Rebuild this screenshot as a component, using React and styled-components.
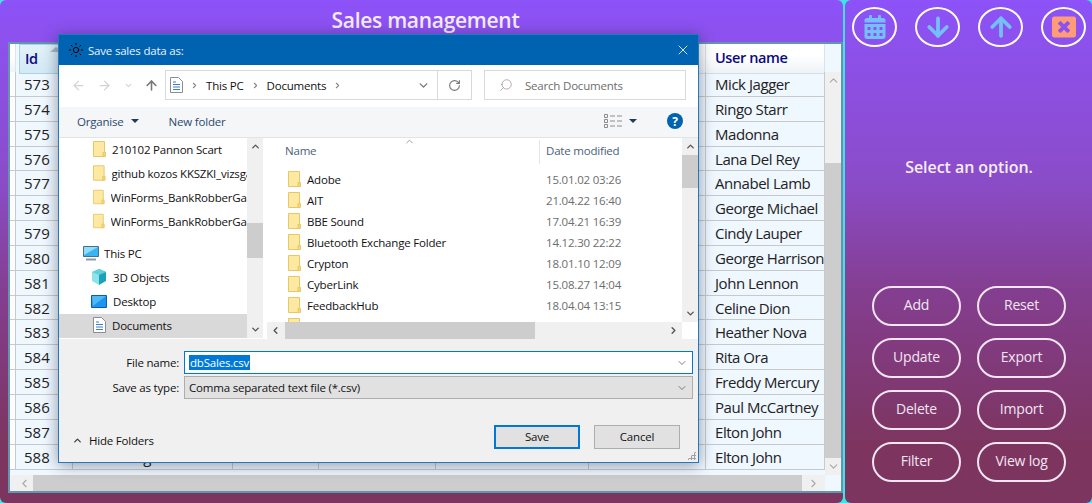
import styled, { createGlobalStyle } from 'styled-components'
import {
  ArrowDown,
  ArrowLeft,
  ArrowRight,
  ArrowUp,
  ChevronDown,
  ChevronLeft,
  ChevronRight,
  ChevronUp,
  RotateCw,
  Search,
  Sun,
  X,
} from 'lucide-react'
import { FaCalendarAlt, FaWindowClose } from 'react-icons/fa'

const sales = [
  [573, 'Mick Jagger'],
  [574, 'Ringo Starr'],
  [575, 'Madonna'],
  [576, 'Lana Del Rey'],
  [577, 'Annabel Lamb'],
  [578, 'George Michael'],
  [579, 'Cindy Lauper'],
  [580, 'George Harrison'],
  [581, 'John Lennon'],
  [582, 'Celine Dion'],
  [583, 'Heather Nova'],
  [584, 'Rita Ora'],
  [585, 'Freddy Mercury'],
  [586, 'Paul McCartney'],
  [587, 'Elton John'],
  [588, 'Elton John'],
]

const quickFolders = ['210102 Pannon Scart', 'github kozos KKSZKI_vizsga', 'WinForms_BankRobberGame', 'WinForms_BankRobberGame']

const folders = [
  ['Adobe', '15.01.02 03:26'],
  ['AIT', '21.04.22 16:40'],
  ['BBE Sound', '17.04.21 16:39'],
  ['Bluetooth Exchange Folder', '14.12.30 22:22'],
  ['Crypton', '18.01.10 12:09'],
  ['CyberLink', '15.08.27 14:04'],
  ['FeedbackHub', '18.04.04 13:15'],
  ['Flash Files', '16.03.03 08:49'],
]

const actions = ['Add', 'Reset', 'Update', 'Export', 'Delete', 'Import', 'Filter', 'View log']

const FolderIcon = () => (
  <svg width="13" height="16" viewBox="0 0 13 16">
    <path d="M.5.5h11v15H.5z" fill="#fde9a2" stroke="#e9c766" />
    <path d="M10 15.5v-4h2.500v4z" fill="#f6d77d" stroke="#e9c766" />
  </svg>
)

const DocIcon = () => (
  <svg width="13" height="16" viewBox="0 0 13 16">
    <path d="M.5.5h8l4 4v11H.5z" fill="#fff" stroke="#8a8f96" />
    <path d="M3 5h3M3 7.500h7M3 10h7M3 12.500h7" stroke="#3d7fc4" />
  </svg>
)

const MonitorIcon = () => (
  <svg width="16" height="15" viewBox="0 0 16 15">
    <path d="M.5.5h15v10H.5z" fill="#39b4f3" stroke="#4a6f8d" />
    <path d="M1 1h14L1 9z" fill="#8fdcfb" />
    <path d="M3 13.500h10" stroke="#8a9aa8" strokeWidth="2" />
  </svg>
)

const CubeIcon = () => (
  <svg width="16" height="16" viewBox="0 0 16 16">
    <path d="M8 0l7 3v9l-7 4z" fill="#1aa3b8" />
    <path d="M8 0L1 3v9l7 4z" fill="#8fe3e8" />
    <path d="M8 0l7 3-7 3-7-3z" fill="#5fd0dc" />
  </svg>
)

const DesktopIcon = () => (
  <svg width="16" height="13" viewBox="0 0 16 13">
    <path d="M.5.5h15v12H.5z" fill="#1a96ee" stroke="#0a5ea8" />
    <path d="M1 1h14L2 11z" fill="#4fb8f5" />
  </svg>
)

const ViewIcon = () => (
  <svg width="18" height="14" viewBox="0 0 18 14">
    <path d="M.5.500h3v3h-3zM.5 5.500h3v3h-3zM.5 10.500h3v3h-3z" fill="none" stroke="#8c8c8c" />
    <path d="M6 2h5M13 2h5M6 7h5M13 7h5M6 12h5M13 12h5" stroke="#8c8c8c" />
  </svg>
)

function SalesTable() {
  return (
    <TableFrame>
      <TableBody>
        <HeaderRow>
          <Corner />
          <IdHeader>
            Id
            <SortMark />
          </IdHeader>
          <HeaderCell />
          <HeaderCell />
          <HeaderCell />
          <HeaderCell />
          <HeaderCell />
          <HeaderCell>User name</HeaderCell>
        </HeaderRow>
        {sales.map(([id, name]) => (
          <Row key={id}>
            <RowHead />
            <Cell>{id}</Cell>
            <Cell>{id === 588 ? 'Recording' : ''}</Cell>
            <Cell />
            <Cell />
            <Cell />
            <Cell />
            <NameCell>{name}</NameCell>
          </Row>
        ))}
      </TableBody>
      <VScroll>
        <ScrollEnd>
          <ChevronUp size={13} />
        </ScrollEnd>
        <VTrack>
          <VThumb />
        </VTrack>
        <ScrollEnd>
          <ChevronDown size={13} />
        </ScrollEnd>
      </VScroll>
      <HScroll>
        <HEnd>
          <ChevronLeft size={13} />
        </HEnd>
        <HThumb />
        <HEnd>
          <ChevronRight size={13} />
        </HEnd>
      </HScroll>
    </TableFrame>
  )
}

function SaveDialog() {
  return (
    <Dialog>
      <TitleBar>
        <Sun size={16} color="#000" strokeWidth={1.5} />
        <TitleText>Save sales data as:</TitleText>
        <CloseMark>
          <X size={16} color="#fff" strokeWidth={1.25} />
        </CloseMark>
      </TitleBar>

      <NavBar>
        <NavArrows>
          <ArrowLeft size={15} color="#d4d4d4" strokeWidth={2} />
          <ArrowRight size={15} color="#d4d4d4" strokeWidth={2} />
          <ChevronDown size={9} color="#d4d4d4" strokeWidth={3} />
          <ArrowUp size={15} color="#777" strokeWidth={2.5} />
        </NavArrows>
        <PathBox>
          <PathInner>
            <DocIcon />
            <ChevronRight size={9} color="#888" strokeWidth={3} />
            <span>This PC</span>
            <ChevronRight size={9} color="#888" strokeWidth={3} />
            <span>Documents</span>
            <ChevronRight size={9} color="#888" strokeWidth={3} />
          </PathInner>
          <ChevronDown size={13} color="#777" strokeWidth={2.5} />
          <RefreshBox>
            <RotateCw size={13} color="#777" strokeWidth={2} />
          </RefreshBox>
        </PathBox>
        <SearchBox>
          <Search size={14} color="#9a8f8f" strokeWidth={1.25} style={{ transform: 'scaleX(-1)' }} />
          <span>Search Documents</span>
        </SearchBox>
      </NavBar>

      <Toolbar>
        <ToolItem>
          Organise
          <Caret />
        </ToolItem>
        <ToolItem>New folder</ToolItem>
        <ToolSpacer />
        <ViewIcon />
        <Caret />
        <HelpMark>?</HelpMark>
      </Toolbar>

      <Browser>
        <TreePane>
          {quickFolders.map((name, i) => (
            <TreeRow key={i} $indent={34}>
              <FolderIcon />
              <TreeText>{name}</TreeText>
            </TreeRow>
          ))}
          <TreeGap />
          <TreeRow $indent={24}>
            <MonitorIcon />
            <span>This PC</span>
          </TreeRow>
          <TreeRow $indent={32}>
            <CubeIcon />
            <span>3D Objects</span>
          </TreeRow>
          <TreeRow $indent={32}>
            <DesktopIcon />
            <span>Desktop</span>
          </TreeRow>
          <TreeRow $indent={34} $selected>
            <DocIcon />
            <span>Documents</span>
          </TreeRow>
        </TreePane>
        <TreeScroll>
          <ChevronUp size={11} color="#555" strokeWidth={3} />
          <TreeThumb />
          <ChevronDown size={11} color="#555" strokeWidth={3} />
        </TreeScroll>

        <ListPane>
          <ListMain>
            <ListColumns>
              <ListHeader>
                <NameHead>
                  Name
                  <NameSort>
                    <ChevronUp size={11} color="#777" strokeWidth={1.5} />
                  </NameSort>
                </NameHead>
                <DateHead>Date modified</DateHead>
              </ListHeader>
              <ListRows>
                {folders.map(([name, date]) => (
                  <ListRow key={name}>
                    <FolderName>
                      <FolderIcon />
                      <span>{name}</span>
                    </FolderName>
                    <FolderDate>{date}</FolderDate>
                  </ListRow>
                ))}
              </ListRows>
            </ListColumns>
            <ListVScroll>
              <ChevronUp size={11} color="#555" strokeWidth={3} />
              <ListThumb />
              <ChevronDown size={11} color="#555" strokeWidth={3} />
            </ListVScroll>
          </ListMain>
          <ListHScroll>
            <ChevronLeft size={11} color="#555" strokeWidth={3} />
            <ListHThumb />
            <ChevronRight size={11} color="#555" strokeWidth={3} />
            <ListCorner />
          </ListHScroll>
        </ListPane>
      </Browser>

      <SaveForm>
        <FormRow>
          <FormLabel>File name:</FormLabel>
          <NameInput>
            <Selected>dbSales.csv</Selected>
            <ChevronDown size={12} color="#555" strokeWidth={1.5} />
          </NameInput>
        </FormRow>
        <FormRow>
          <FormLabel>Save as type:</FormLabel>
          <TypeSelect>
            <span>Comma separated text file (*.csv)</span>
            <ChevronDown size={12} color="#555" strokeWidth={1.5} />
          </TypeSelect>
        </FormRow>
        <FormFooter>
          <HideFolders>
            <ChevronUp size={11} color="#444" strokeWidth={3} />
            Hide Folders
          </HideFolders>
          <DialogButton $primary>Save</DialogButton>
          <DialogButton>Cancel</DialogButton>
        </FormFooter>
        <Grip />
      </SaveForm>
    </Dialog>
  )
}

export default function App() {
  return (
    <>
      <GlobalStyle />
      <Page>
        <MainPanel>
          <Title>Sales management</Title>
          <SalesTable />
        </MainPanel>

        <SidePanel>
          <IconRow>
            <RoundIcon>
              <FaCalendarAlt size={24} color="#74c0fc" />
            </RoundIcon>
            <RoundIcon>
              <ArrowDown size={30} color="#74c0fc" strokeWidth={3} />
            </RoundIcon>
            <RoundIcon>
              <ArrowUp size={30} color="#74c0fc" strokeWidth={3} />
            </RoundIcon>
            <RoundIcon>
              <FaWindowClose size={24} color="#ff9b76" />
            </RoundIcon>
          </IconRow>
          <Message>Select an option.</Message>
          <ActionGrid>
            {actions.map((label) => (
              <ActionButton key={label}>{label}</ActionButton>
            ))}
          </ActionGrid>
        </SidePanel>

        <SaveDialog />
      </Page>
    </>
  )
}

const uiFont = `'Open Sans', 'Noto Sans', sans-serif`
const panelGradient = `linear-gradient(180deg, #8d52f8 0%, #8b4cc8 36%, #843e90 58%, #7d3560 88%, #7c355e 100%)`
const tableColumns = `6px 57px 160px 86px 117px 153px 117px 119px`

const GlobalStyle = createGlobalStyle`
  html, body {
    margin: 0;
    padding: 0;
    overflow: hidden;
  }

  body {
    font-family: ${uiFont};
  }
`

const Page = styled.div`
  position: relative;
  display: flex;
  gap: 2px;
  width: 1092px;
  height: 503px;
  background: #3fe3ea;
  overflow: hidden;
`

const MainPanel = styled.main`
  display: flex;
  flex-direction: column;
  width: 843px;
  padding: 0 0 10px 8px;
  box-sizing: border-box;
  border-radius: 6px;
  background: ${panelGradient};
`

const Title = styled.h1`
  margin: 0;
  height: 42px;
  line-height: 40px;
  text-align: center;
  font-size: 21px;
  font-weight: 600;
  letter-spacing: -0.3px;
  color: #f4ecff;
`

const TableFrame = styled.div`
  display: grid;
  grid-template-columns: 815px 16px;
  grid-template-rows: 431px 16px;
  border: 2px solid #6494ae;
  background: #eff7ff;
`

const TableBody = styled.div`
  overflow: hidden;
  background: #eff7ff;
`

const HeaderRow = styled.div`
  display: grid;
  grid-template-columns: ${tableColumns};
  height: 28px;
`

const HeaderCell = styled.div`
  padding: 0 0 0 9px;
  box-sizing: border-box;
  border-right: 1px solid #dfe3e8;
  border-bottom: 1px solid #d5dde3;
  background: linear-gradient(180deg, #ffffff 40%, #eef3f7 100%);
  font-size: 14.5px;
  font-weight: 600;
  line-height: 28px;
  color: #0a0a80;
  letter-spacing: -0.4px;
`

const Corner = styled(HeaderCell)`
  padding: 0;
`

const IdHeader = styled(HeaderCell)`
  position: relative;
  padding-left: 5px;
  margin-left: 3px;
  background: linear-gradient(180deg, #e2f2fa 0%, #d3e9f5 100%);
  border: 1px solid #a9d3e6;
`

const SortMark = styled.span`
  position: absolute;
  top: 2px;
  right: 10px;
  border-left: 6px solid transparent;
  border-right: 6px solid transparent;
  border-bottom: 5px solid #a3bccb;
`

const Row = styled.div`
  display: grid;
  grid-template-columns: ${tableColumns};
  height: 24.85px;
`

const Cell = styled.div`
  padding-left: 8px;
  box-sizing: border-box;
  border-right: 1px solid #c9c9c9;
  border-bottom: 1px solid #c9c9c9;
  font-size: 15px;
  line-height: 24px;
  color: #222;
  white-space: nowrap;
  overflow: hidden;
`

const RowHead = styled(Cell)`
  padding: 0;
  background: #fbfdff;
`

const NameCell = styled(Cell)`
  padding-left: 9px;
  letter-spacing: -0.45px;
`

const VScroll = styled.div`
  display: flex;
  flex-direction: column;
  margin-top: 28px;
  background: #f0f0f0;
  color: #a8a8a8;
`

const ScrollEnd = styled.div`
  display: flex;
  align-items: center;
  justify-content: center;
  height: 17px;
`

const VTrack = styled.div`
  flex: 1;
  padding-top: 74px;
`

const VThumb = styled.div`
  height: 295px;
  background: #cdcdcd;
`

const HScroll = styled.div`
  display: flex;
  background: #f0f0f0;
  color: #a8a8a8;
`

const HEnd = styled.div`
  display: flex;
  align-items: center;
  justify-content: center;
  width: 17px;
  margin-left: 6px;
  &:last-child {
    width: 23px;
    margin-left: 0;
  }
`

const HThumb = styled.div`
  flex: 1;
  background: #cdcdcd;
`

const SidePanel = styled.aside`
  flex: 1;
  display: flex;
  flex-direction: column;
  padding: 7px 6px 21px 7px;
  box-sizing: border-box;
  border-radius: 6px;
  background: ${panelGradient};
`

const IconRow = styled.div`
  display: flex;
  justify-content: space-between;
`

const RoundIcon = styled.button`
  display: flex;
  align-items: center;
  justify-content: center;
  width: 45px;
  height: 40px;
  padding: 0;
  border: 2px solid #fff;
  border-radius: 50%;
  background: transparent;
`

const Message = styled.p`
  margin: 109px 0 0;
  text-align: center;
  font-size: 16px;
  font-weight: 600;
  line-height: 22px;
  letter-spacing: -0.05px;
  color: #f6ecfa;
`

const ActionGrid = styled.div`
  display: grid;
  grid-template-columns: 89px 89px;
  grid-auto-rows: 40px;
  gap: 12px 16px;
  margin-top: auto;
  padding-left: 20px;
`

const ActionButton = styled.button`
  padding: 0 0 3px;
  border: 2px solid #f3e6f3;
  border-radius: 20px;
  background: transparent;
  font-family: ${uiFont};
  font-size: 14px;
  letter-spacing: -0.2px;
  color: #f3e6f3;
`

const Dialog = styled.section`
  position: absolute;
  left: 58px;
  top: 34px;
  display: flex;
  flex-direction: column;
  width: 641px;
  height: 429px;
  box-sizing: border-box;
  border: 1px solid #1f7ac2;
  background: #fff;
  box-shadow: 0 2px 14px rgba(20, 30, 50, 0.45);
  font-size: 11.5px;
  letter-spacing: -0.2px;
  color: #111;
`

const TitleBar = styled.header`
  display: flex;
  align-items: center;
  gap: 4px;
  flex: none;
  height: 30px;
  padding-left: 9px;
  background: #0063b1;
`

const TitleText = styled.span`
  color: #e8f2fb;
`

const CloseMark = styled.span`
  display: flex;
  margin-left: auto;
  margin-right: 7px;
`

const NavBar = styled.div`
  display: flex;
  align-items: center;
  flex: none;
  height: 42px;
  padding-bottom: 2px;
  box-sizing: border-box;
`

const NavArrows = styled.div`
  display: flex;
  align-items: center;
  justify-content: space-between;
  width: 88px;
  margin: 0 6px 0 12px;
`

const PathBox = styled.div`
  display: flex;
  align-items: center;
  justify-content: space-between;
  width: 307px;
  height: 30px;
  box-sizing: border-box;
  border: 1px solid #d9d9d9;
  padding-left: 4px;
`

const PathInner = styled.div`
  display: flex;
  align-items: center;
  gap: 7px;
  flex: 1;
`

const RefreshBox = styled.div`
  display: flex;
  align-items: center;
  justify-content: center;
  width: 33px;
  height: 28px;
  margin-left: 7px;
  border-left: 1px solid #d9d9d9;
`

const SearchBox = styled.div`
  display: flex;
  align-items: center;
  gap: 12px;
  width: 202px;
  height: 30px;
  margin-left: 12px;
  padding-left: 14px;
  box-sizing: border-box;
  border: 1px solid #d9d9d9;
  color: #6d6d6d;
`

const Toolbar = styled.div`
  display: flex;
  align-items: center;
  flex: none;
  height: 31px;
  padding: 0 15px 2px 18px;
  box-sizing: border-box;
  border-bottom: 1px solid #e3e4e6;
  background: #f5f6f7;
  color: #2b4a6f;
`

const ToolItem = styled.span`
  display: flex;
  align-items: center;
  margin-right: 30px;
`

const ToolSpacer = styled.div`
  flex: 1;
`

const Caret = styled.span`
  margin-left: 7px;
  border-left: 4px solid transparent;
  border-right: 4px solid transparent;
  border-top: 4px solid #1f3a5f;
`

const HelpMark = styled.span`
  display: flex;
  align-items: center;
  justify-content: center;
  width: 16px;
  height: 16px;
  margin-left: 30px;
  border-radius: 50%;
  background: #0063b1;
  font-size: 12px;
  font-weight: 700;
  color: #fff;
`

const Browser = styled.div`
  display: flex;
  flex: none;
  height: 201px;
`

const TreePane = styled.div`
  width: 188px;
  overflow: hidden;
  flex: none;
`

const TreeRow = styled.div`
  display: flex;
  align-items: center;
  gap: ${(props) => (props.$indent === 24 ? 5 : 6)}px;
  height: 24px;
  padding: 0 0 2px ${(props) => props.$indent}px;
  box-sizing: border-box;
  background: ${(props) => (props.$selected ? '#d9d9d9' : 'transparent')};
  white-space: nowrap;
`

const TreeText = styled.span`
  overflow: hidden;
`

const TreeGap = styled.div`
  height: 8px;
`

const TreeScroll = styled.div`
  position: relative;
  display: flex;
  flex-direction: column;
  align-items: center;
  justify-content: space-between;
  flex: none;
  width: 16px;
  height: 200px;
  padding: 3px 0;
  box-sizing: border-box;
  background: #f0f0f0;
`

const TreeThumb = styled.div`
  position: absolute;
  top: 85px;
  left: 0;
  width: 16px;
  height: 35px;
  background: #cdcdcd;
`

const ListPane = styled.div`
  display: flex;
  flex-direction: column;
  width: 431px;
  margin-left: 4px;
`

const ListMain = styled.div`
  display: flex;
  height: 184px;
`

const ListColumns = styled.div`
  flex: 1;
  overflow: hidden;
`

const ListHeader = styled.div`
  display: flex;
  height: 30.5px;
  padding-top: 2px;
  box-sizing: border-box;
  color: #4c607a;
`

const NameHead = styled.div`
  position: relative;
  width: 273px;
  padding: 3px 0 0 18px;
  box-sizing: border-box;
  border-right: 1px solid #e5e5e5;
  height: 24px;
`

const NameSort = styled.span`
  position: absolute;
  top: -5px;
  left: 137px;
`

const DateHead = styled.div`
  padding: 3px 0 0 6px;
`

const ListRows = styled.div`
  overflow: hidden;
`

const ListRow = styled.div`
  display: flex;
  align-items: center;
  height: 21px;
`

const FolderName = styled.div`
  display: flex;
  align-items: center;
  gap: 6px;
  width: 279px;
  padding-left: 21px;
  box-sizing: border-box;
`

const FolderDate = styled.div`
  color: #6d6d6d;
`

const ListVScroll = styled.div`
  position: relative;
  display: flex;
  flex-direction: column;
  align-items: center;
  justify-content: space-between;
  flex: none;
  width: 16px;
  padding: 3px 0;
  box-sizing: border-box;
  background: #f0f0f0;
`

const ListThumb = styled.div`
  position: absolute;
  top: 17px;
  left: 0;
  width: 16px;
  height: 33px;
  background: #cdcdcd;
`

const ListHScroll = styled.div`
  display: flex;
  align-items: center;
  height: 17px;
  padding-left: 3px;
  background: #f0f0f0;
`

const ListHThumb = styled.div`
  width: 250px;
  height: 17px;
  margin: 0 auto 0 4px;
  background: #cdcdcd;
`

const ListCorner = styled.div`
  width: 16px;
  height: 17px;
  margin-left: 3px;
  background: #fff;
`

const SaveForm = styled.div`
  position: relative;
  flex: 1;
  padding-top: 12px;
  background: #f0f0f0;
`

const FormRow = styled.div`
  display: flex;
  align-items: center;
  height: 23px;
  margin-bottom: 2px;
`

const FormLabel = styled.label`
  width: 120px;
  margin-right: 5px;
  text-align: right;
`

const NameInput = styled.div`
  display: flex;
  align-items: center;
  justify-content: space-between;
  width: 509px;
  height: 23px;
  padding: 0 4px;
  box-sizing: border-box;
  border: 1px solid #0078d7;
  background: #fff;
`

const Selected = styled.span`
  padding: 0 1px;
  background: #0078d7;
  color: #fff;
`

const TypeSelect = styled(NameInput)`
  border-color: #adadad;
  background: #e1e1e1;
`

const FormFooter = styled.div`
  display: flex;
  align-items: center;
  height: 24px;
  margin-top: 26px;
  padding-left: 13px;
`

const HideFolders = styled.div`
  display: flex;
  align-items: center;
  gap: 6px;
  width: 422px;
  padding-top: 6px;
`

const DialogButton = styled.button`
  width: 86px;
  height: 24px;
  margin-right: 14px;
  padding: 0 0 2px;
  box-sizing: border-box;
  border: ${(props) => (props.$primary ? '2px solid #0078d7' : '1px solid #adadad')};
  background: #e1e1e1;
  font-family: ${uiFont};
  font-size: 11.5px;
  letter-spacing: -0.2px;
  color: #111;
`

const Grip = styled.span`
  position: absolute;
  right: 2px;
  bottom: 2px;
  width: 9px;
  height: 9px;
  background-image: radial-gradient(#a0a0a0 1px, transparent 1.2px);
  background-size: 3px 3px;
  clip-path: polygon(100% 0, 100% 100%, 0 100%);
`
